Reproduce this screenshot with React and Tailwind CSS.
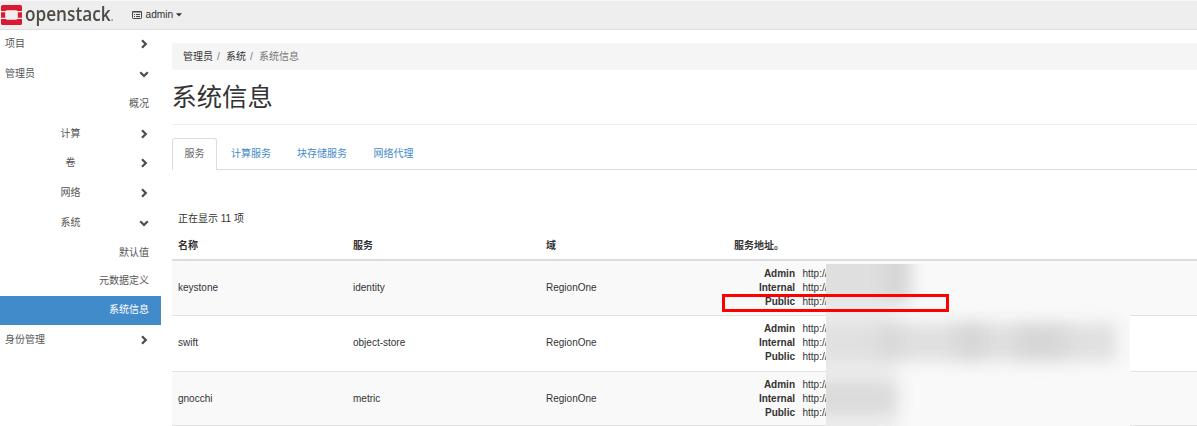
import React from 'react';

const nav = [
  { label: '项目', level: 0, icon: 'right', h: 'h-[30px]' },
  { label: '管理员', level: 0, icon: 'down', h: 'h-[30px]' },
  { label: '概况', level: 2, h: 'h-[30px]' },
  { label: '计算', level: 1, icon: 'right', h: 'h-[29px]' },
  { label: '卷', level: 1, icon: 'right', h: 'h-[30px]' },
  { label: '网络', level: 1, icon: 'right', h: 'h-[30px]' },
  { label: '系统', level: 1, icon: 'down', h: 'h-[30px]' },
  { label: '默认值', level: 2, h: 'h-[29px]' },
  { label: '元数据定义', level: 2, h: 'h-[28.500px]' },
  { label: '系统信息', level: 2, active: true, h: 'h-[29px]' },
  { label: '身份管理', level: 0, icon: 'right', h: 'h-[30px]' },
];

const services = [
  { name: 'keystone', service: 'identity' },
  { name: 'swift', service: 'object-store' },
  { name: 'gnocchi', service: 'metric' },
];

function Chevron({ dir }) {
  return (
    <svg width="10" height="10" viewBox="0 0 10 10" fill="none" stroke="#4c4c4c" strokeWidth="2.200">
      <path d={dir === 'right' ? 'M3 1.200 6.800 5 3 8.800' : 'M1.200 3.200 5 7 8.800 3.200'} />
    </svg>
  );
}

function Header() {
  return (
    <header className="flex h-[30px] items-center border-t border-b border-t-[#f8f8f8] border-b-[#dedede] bg-[#eeeeee]">
      <svg className="ml-px shrink-0" width="21" height="20" viewBox="0 0 21 20">
        <path
          fill="#da1a32"
          d="M1.6 0h17.8Q21 0 21 1.6V6h-5.2V5.2H5.2V6H0V1.6Q0 0 1.6 0ZM0 7.2h4.2v5.6H0ZM16.8 7.2H21v5.6h-4.2ZM0 14h5.2v.8h10.6V14H21v4.400Q21 20 19.400 20H1.6Q0 20 0 18.400Z"
        />
      </svg>
      <div className="ml-[3px] w-[107px] shrink-0">
        <span className="inline-block origin-left scale-x-[0.86] pb-px font-['Open_Sans'] text-[20px] leading-[27px] font-semibold whitespace-nowrap text-[#4f4a45]">
          openstack<span className="text-[14px] text-[#999]">.</span>
        </span>
      </div>
      <svg className="shrink-0" width="10" height="8" viewBox="0 0 10 8" fill="none" stroke="#444">
        <rect x=".5" y=".5" width="9" height="7" rx=".7" />
        <path d="M0 1h10M2 3.500h1M4 3.500h4M2 5.500h1M4 5.500h4" />
      </svg>
      <span className="ml-[3.500px] text-[10.200px] text-[#333]">admin</span>
      <svg className="ml-[3px]" width="6" height="4" viewBox="0 0 6 4">
        <path d="M0 .3h6L3 3.500Z" fill="#333" />
      </svg>
    </header>
  );
}

function NavItem({ item }) {
  const color = item.active ? 'bg-[#428bca] text-white' : 'text-[#555]';
  return (
    <li className={`flex items-center ${item.h} ${color} ${item.level === 2 ? 'justify-end pr-3' : 'justify-between pr-3 pl-[5px]'}`}>
      <span className={item.level === 1 ? 'w-[131px] text-center' : ''}>{item.label}</span>
      {item.icon && <Chevron dir={item.icon} />}
    </li>
  );
}

function Smudge() {
  return (
    <div className="absolute top-[29px] left-[654px] h-[162px] w-[304px] overflow-hidden bg-[#f9f9f9]">
      <div className="absolute top-5 -left-5 h-[160px] w-[90px] bg-[#ededed] blur-[10px]" />
      <div className="absolute -top-8 -left-8 h-[69px] w-[118px] bg-[#dfdfdf] blur-[8px]" />
      <div className="absolute -top-4 left-[58px] h-[50px] w-[20px] bg-[#d6d6d6] blur-[7px]" />
      <div className="absolute top-[59px] -left-3 h-[38px] w-[302px] bg-[#e0e0e0] blur-[8px]" />
      <div className="absolute top-[65px] left-[55px] h-[25px] w-[20px] bg-[#d6d6d6] blur-[9px]" />
      <div className="absolute top-[63px] left-[130px] h-[28px] w-[30px] bg-[#d5d5d5] blur-[9px]" />
      <div className="absolute top-[65px] left-[190px] h-[26px] w-[50px] bg-[#d5d5d5] blur-[9px]" />
      <div className="absolute top-[118px] -left-5 h-[32px] w-[90px] bg-[#dadada] blur-[8px]" />
    </div>
  );
}

function ServiceTable() {
  const columns = 'grid grid-cols-[175px_193px_188px_1fr] pl-1.5';
  return (
    <div className="relative mt-[6px]">
      <div className={`${columns} h-[26px] items-center border-b-2 border-[#dddddd] pb-[2px] font-bold`}>
        <span>名称</span>
        <span>服务</span>
        <span>域</span>
        <span>服务地址。</span>
      </div>
      {services.map((s, i) => (
        <div
          key={s.name}
          className={`${columns} items-center border-b border-[#e2e2e2] ${i === 0 ? 'h-[55px]' : i === 1 ? 'h-[56px] pb-px' : 'h-[54px]'} ${i % 2 ? 'bg-white' : 'bg-[#f9f9f9]'}`}
        >
          <span>{s.name}</span>
          <span>{s.service}</span>
          <span>RegionOne</span>
          <dl className="grid grid-cols-[61px_1fr] gap-x-[7.500px] leading-[14px]">
            {['Admin', 'Internal', 'Public'].map((kind) => (
              <React.Fragment key={kind}>
                <dt className="text-right font-bold">{kind}</dt>
                <dd>http://</dd>
              </React.Fragment>
            ))}
          </dl>
        </div>
      ))}
      <Smudge />
      <div className="absolute top-[59px] left-[550px] h-[18px] w-[227px] border-3 border-[#ff0000]" />
    </div>
  );
}

export default function App() {
  return (
    <div className="h-[426px] w-[1197px] overflow-hidden bg-white font-['Liberation_Sans','Noto_Sans_CJK_SC',sans-serif] text-[10px] leading-[14px] text-[#333]">
      <Header />
      <div className="flex">
        <ul className="-mt-px w-[161px] shrink-0">
          {nav.map((item) => (
            <NavItem key={item.label} item={item} />
          ))}
        </ul>
        <main className="ml-[11px] flex-1 pt-[13px]">
          <nav className="flex h-[27px] items-center rounded-l-[3px] bg-[#f5f5f5] pl-[11px]">
            <span>管理员</span>
            <span className="ml-1 w-[9px] text-[#777]">/</span>
            <span>系统</span>
            <span className="ml-1 w-[9px] text-[#777]">/</span>
            <span className="text-[#777]">系统信息</span>
          </nav>
          <h1 className="flex h-[55px] items-center border-b border-[#eeeeee] text-[25.300px]">
            <span className="-ml-[0.500px]">系统信息</span>
          </h1>
          <div className="mt-[13px] flex h-[32px] border-b border-[#dddddd] text-[#428bca]">
            <span className="-mb-px flex w-[45px] items-center justify-center rounded-t-[3px] border border-b-0 border-[#dddddd] bg-white pb-px text-[#666]">服务</span>
            <span className="flex items-center pl-[14px]">计算服务</span>
            <span className="flex items-center pl-[26px]">块存储服务</span>
            <span className="flex items-center pl-[26.500px]">网络代理</span>
          </div>
          <p className="mt-[42px] ml-1.5 h-[17px]">正在显示 11 项</p>
          <ServiceTable />
        </main>
      </div>
    </div>
  );
}
